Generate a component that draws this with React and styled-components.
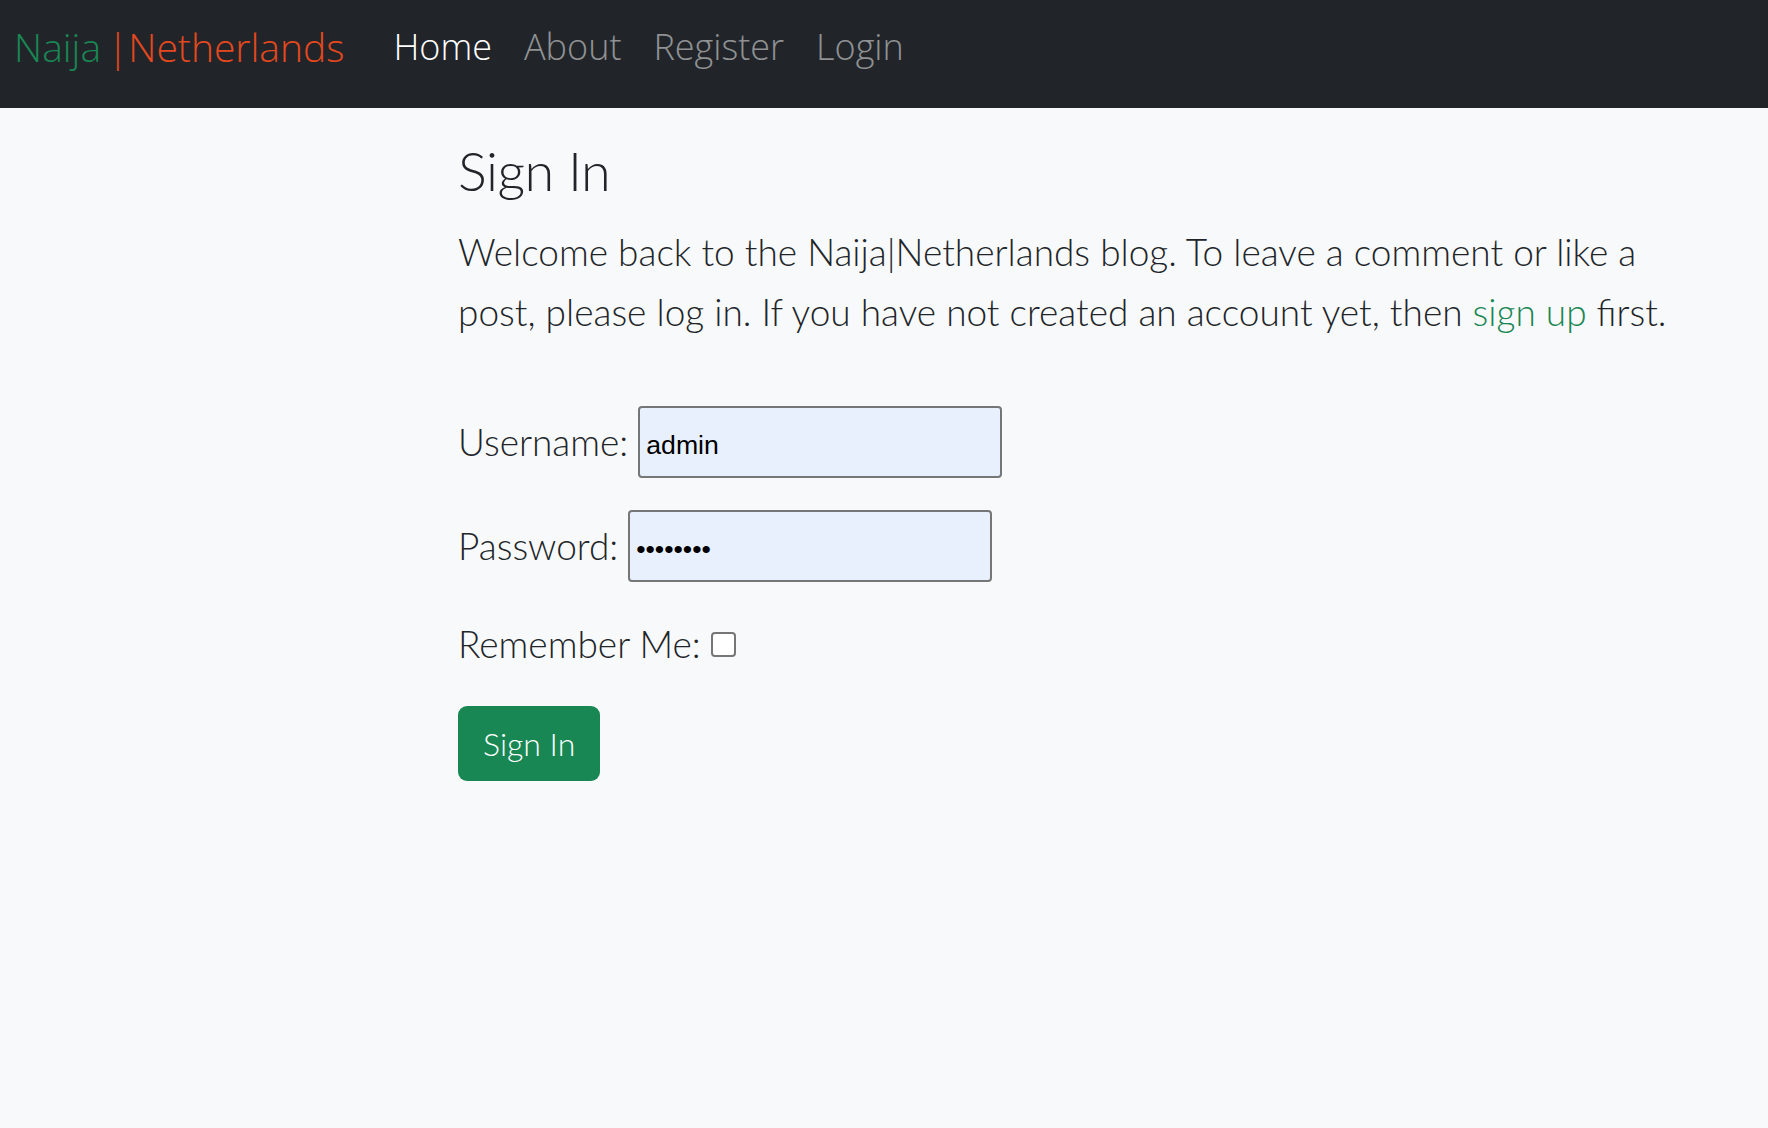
import React from 'react';
import styled, { createGlobalStyle } from 'styled-components';

const GlobalStyle = createGlobalStyle`
    body {
        margin: 0;
        background: #f8f9fa;
        color: #212529;
        font-family: Lato, "Noto Sans", sans-serif;
        font-weight: 300;
    }
`;

const Navbar = styled.nav`
    box-sizing: border-box;
    display: flex;
    align-items: center;
    height: 108px;
    padding: 0 0 16px 14px;
    background: #212529;
    font-family: "Open Sans", "Noto Sans", sans-serif;
    font-weight: 300;
`;

const Brand = styled.a`
    margin-right: 33px;
    font-size: 39px;
    color: #198754;
    text-decoration: none;
    white-space: pre;
`;

const BrandAccent = styled.span`
    margin-left: -4px;
    color: #e5481e;
`;

const NavLinks = styled.ul`
    display: flex;
    margin: 0;
    padding: 0;
    list-style: none;
`;

const NavLink = styled.a`
    display: block;
    padding: 0 16px;
    font-size: 36px;
    color: ${p => (p.$active ? '#ffffff' : 'rgba(255,255,255,0.5)')};
    text-decoration: none;
`;

const Main = styled.main`
    padding: 28px 60px 0 458px;
`;

const Title = styled.h2`
    margin: 0 0 16px;
    font-size: 54px;
    line-height: 70px;
    font-weight: 300;
    letter-spacing: -0.5px;
`;

const Lead = styled.p`
    max-width: 1240px;
    margin: 0;
    font-size: 37px;
    line-height: 60px;
`;

const Link = styled.a`
    color: #198754;
    text-decoration: none;
`;

const Form = styled.form`
    display: flex;
    flex-direction: column;
    align-items: flex-start;
    gap: 32px;
    margin-top: 64px;
`;

const Row = styled.label`
    display: flex;
    align-items: center;
    gap: 10px;
    font-size: 37px;
    line-height: 60px;
`;

const Input = styled.input`
    box-sizing: border-box;
    width: 364px;
    height: 72px;
    padding: 6px 6px 0;
    border: 2px solid #767676;
    border-radius: 4px;
    background: #e8f0fe;
    color: #000;
    font-family: "Liberation Sans", Arial, sans-serif;
    font-size: 26.67px;
    outline: none;
`;

const Checkbox = styled.input`
    appearance: none;
    box-sizing: border-box;
    width: 25px;
    height: 25px;
    margin: 0;
    border: 2px solid #767676;
    border-radius: 4px;
    background: #fff;
`;

const Button = styled.button`
    height: 75px;
    padding: 0 25px;
    border: none;
    border-radius: 9px;
    background: #198754;
    color: #fff;
    font-family: Lato, "Noto Sans", sans-serif;
    font-weight: 300;
    font-size: 32px;
    cursor: pointer;
`;

export default function App() {
    return (
        <>
            <GlobalStyle />
            <Navbar>
                <Brand href="#">
                    Naija <BrandAccent>|Netherlands</BrandAccent>
                </Brand>
                <NavLinks>
                    <li><NavLink href="#" $active>Home</NavLink></li>
                    <li><NavLink href="#">About</NavLink></li>
                    <li><NavLink href="#">Register</NavLink></li>
                    <li><NavLink href="#">Login</NavLink></li>
                </NavLinks>
            </Navbar>
            <Main>
                <Title>Sign In</Title>
                <Lead>
                    Welcome back to the Naija|Netherlands blog. To leave a comment or like a
                    post, please log in. If you have not created an account yet, then{' '}
                    <Link href="#">sign up</Link> first.
                </Lead>
                <Form onSubmit={e => e.preventDefault()}>
                    <Row>
                        Username: <Input type="text" defaultValue="admin" />
                    </Row>
                    <Row>
                        Password: <Input type="password" defaultValue="password" />
                    </Row>
                    <Row>
                        Remember Me: <Checkbox type="checkbox" />
                    </Row>
                    <Button type="submit">Sign In</Button>
                </Form>
            </Main>
        </>
    );
}
